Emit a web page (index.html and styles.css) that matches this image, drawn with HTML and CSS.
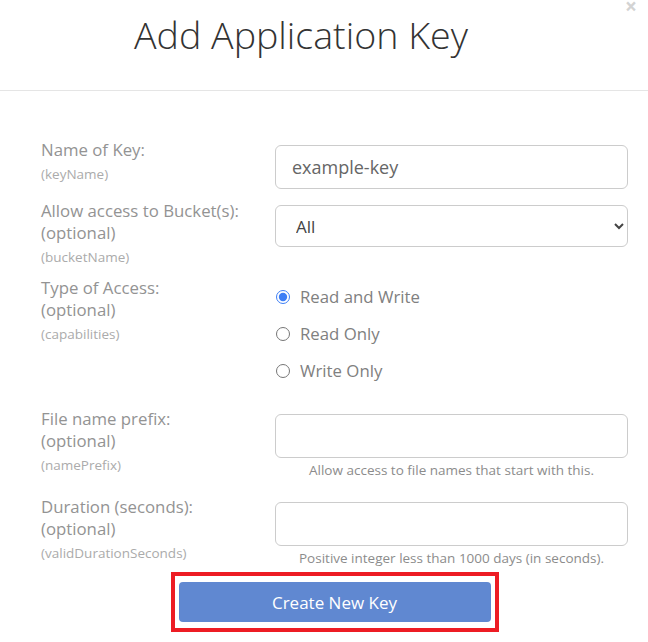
FILE: index.html
```html
<!DOCTYPE html>
<html>
<head>
<meta charset="utf-8">
<link rel="stylesheet" href="styles.css">
</head>
<body>
<div class="modal">
  <div class="modal-header">
    <button class="close" type="button">&times;</button>
    <h1 class="title">Add Application Key</h1>
  </div>
  <form class="modal-body">
    <div class="row">
      <div class="label-col">
        <div class="label">Name of Key:</div>
        <div class="sub">(keyName)</div>
      </div>
      <div class="ctrl-col">
        <input class="field" type="text" value="example-key">
      </div>
    </div>
    <div class="row">
      <div class="label-col">
        <div class="label">Allow access to Bucket(s):</div>
        <div class="label">(optional)</div>
        <div class="sub">(bucketName)</div>
      </div>
      <div class="ctrl-col">
        <select class="field select"><option>All</option></select>
      </div>
    </div>
    <div class="row">
      <div class="label-col">
        <div class="label">Type of Access:</div>
        <div class="label">(optional)</div>
        <div class="sub">(capabilities)</div>
      </div>
      <div class="ctrl-col radios">
        <label class="radio"><input type="radio" name="cap" checked><span>Read and Write</span></label>
        <label class="radio"><input type="radio" name="cap"><span>Read Only</span></label>
        <label class="radio"><input type="radio" name="cap"><span>Write Only</span></label>
      </div>
    </div>
    <div class="row">
      <div class="label-col">
        <div class="label">File name prefix:</div>
        <div class="label">(optional)</div>
        <div class="sub">(namePrefix)</div>
      </div>
      <div class="ctrl-col">
        <input class="field" type="text">
        <div class="help">Allow access to file names that start with this.</div>
      </div>
    </div>
    <div class="row">
      <div class="label-col">
        <div class="label">Duration (seconds):</div>
        <div class="label">(optional)</div>
        <div class="sub">(validDurationSeconds)</div>
      </div>
      <div class="ctrl-col">
        <input class="field" type="text">
        <div class="help">Positive integer less than 1000 days (in seconds).</div>
      </div>
    </div>
    <div class="actions">
      <div class="highlight">
        <button class="btn" type="button">Create New Key</button>
      </div>
    </div>
  </form>
</div>
</body>
</html>
```

FILE: styles.css
```css
* { box-sizing: border-box; }
html, body { margin: 0; padding: 0; background: #fff; }
body { font-family: "Open Sans", "Liberation Sans", sans-serif; }
.modal { width: 648px; }
.modal-header {
  position: relative;
  height: 91px;
  border-bottom: 1px solid #e5e5e5;
  padding-left: 134px;
}
.title {
  margin: 0;
  padding-top: 10px;
  font-size: 37.6px;
  font-weight: 300;
  line-height: 50px;
  color: #333;
}
.close {
  position: absolute;
  top: 0;
  right: 11px;
  height: 12px;
  border: 0;
  background: none;
  padding: 0;
  font-family: "Open Sans", sans-serif;
  font-size: 21px;
  line-height: 11px;
  font-weight: 700;
  color: #d3d3d3;
}
.modal-body {
  padding: 48px 20px 0 41px;
}
.row {
  display: flex;
  align-items: flex-start;
  margin-bottom: 11px;
}
.label-col { width: 234px; flex: none; }
.label {
  font-size: 16.8px;
  line-height: 22px;
  color: #939393;
}
.sub {
  font-size: 13.5px;
  line-height: 22px;
  color: #ababab;
  padding-top: 2px;
  margin-bottom: -2px;
}
.ctrl-col { flex: 1; padding-top: 6px; }
.field {
  display: block;
  width: 100%;
  height: 44px;
  border: 1px solid #ccc;
  border-radius: 6px;
  padding: 0 16px;
  font-family: "Open Sans", sans-serif;
  font-size: 18px;
  color: #666;
  background: #fff;
  outline: none;
}
.select {
  height: 42px;
  margin-top: -1px;
  padding: 0 12px 0 16px;
  font-size: 17px;
  color: #444;
}
.radios { padding-top: 1px; padding-bottom: 8px; }
.radio {
  display: flex;
  align-items: center;
  height: 37px;
  font-size: 16.8px;
  color: #808080;
}
.radio input {
  margin: 0 10px 0 1px;
  width: 14px;
  height: 14px;
  accent-color: #3d7ef5;
}
.help {
  text-align: center;
  font-size: 13.5px;
  line-height: 20px;
  color: #8c8c8c;
  padding-top: 2px;
  margin-bottom: 5px;
}
.actions {
  display: flex;
  justify-content: center;
  margin-top: -12px;
}
.highlight {
  border: 4px solid #ed1c24;
  padding: 6px 4px;
}
.btn {
  display: block;
  width: 312px;
  height: 40px;
  border: 0;
  border-radius: 4px;
  background: #6088d1;
  color: #fff;
  font-family: "Open Sans", sans-serif;
  font-size: 17px;
}
```
